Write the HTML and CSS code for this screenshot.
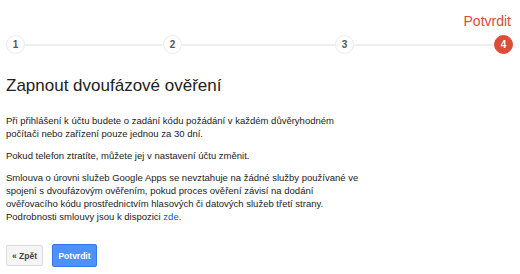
FILE: index.html
```html
<!DOCTYPE html>
<html>
<head>
<meta charset="utf-8">
<link rel="stylesheet" href="styles.css">
</head>
<body>
<div class="page">
  <div class="stepper">
    <div class="step-title">Potvrdit</div>
    <div class="steps">
      <div class="circle">1</div>
      <div class="line"></div>
      <div class="circle">2</div>
      <div class="line"></div>
      <div class="circle">3</div>
      <div class="line"></div>
      <div class="circle active">4</div>
    </div>
  </div>
  <h1 class="title">Zapnout dvoufázové ověření</h1>
  <div class="content">
    <p>Při přihlášení k účtu budete o zadání kódu požádání v každém důvěryhodném počítači nebo zařízení pouze jednou za 30 dní.</p>
    <p>Pokud telefon ztratíte, můžete jej v nastavení účtu změnit.</p>
    <p>Smlouva o úrovni služeb Google Apps se nevztahuje na žádné služby používané ve spojení s dvoufázovým ověřením, pokud proces ověření závisí na dodání ověřovacího kódu prostřednictvím hlasových či datových služeb třetí strany. Podrobnosti smlouvy jsou k dispozici <a href="#">zde</a>.</p>
  </div>
  <div class="actions">
    <button class="btn btn-back">« Zpět</button>
    <button class="btn btn-primary">Potvrdit</button>
  </div>
</div>
</body>
</html>
```
FILE: styles.css
```css
html, body {
  margin: 0;
  padding: 0;
  background: #fff;
}
body {
  font-family: "Liberation Sans", Arial, sans-serif;
  color: #222;
}
.page {
  padding: 0 6px;
  width: 507px;
}
.stepper {
  display: flex;
  flex-direction: column;
  padding-top: 13px;
}
.step-title {
  align-self: flex-end;
  color: #dd4b39;
  font-size: 14px;
  line-height: 16px;
  margin-right: 2px;
}
.steps {
  display: grid;
  grid-template-columns: 19px 138px 19px 153px 19px 140px 19px;
  align-items: center;
  margin-top: 6px;
}
.circle {
  width: 17px;
  height: 17px;
  border: 1px solid #ebebeb;
  border-radius: 50%;
  display: flex;
  align-items: center;
  justify-content: center;
  font-size: 10px;
  font-weight: bold;
  color: #555;
  background: #fff;
}
.circle.active {
  background: #dd4b39;
  border-color: #dd4b39;
  color: #fff;
}
.line {
  height: 2px;
  background: #efefef;
}
.title {
  font-size: 17px;
  font-weight: normal;
  margin: 22px 0 0;
  line-height: 20px;
  color: #222;
}
.content {
  margin-top: 18px;
  width: 360px;
  font-size: 9.5px;
  line-height: 13px;
  color: #222;
}
.content p {
  margin: 0 0 9px;
}
.content p:last-child {
  margin-bottom: 0;
}
.content a {
  color: #15c;
  text-decoration: none;
}
.actions {
  display: flex;
  align-items: center;
  gap: 9px;
  margin-top: 21px;
}
.btn {
  font-family: "Liberation Sans", Arial, sans-serif;
  font-size: 8.5px;
  font-weight: bold;
  border-radius: 2px;
  cursor: default;
}
.btn-back {
  background: #f5f5f5;
  border: 1px solid #dcdcdc;
  color: #444;
  height: 21px;
  width: 37px;
  padding: 0;
}
.btn-primary {
  background: #4d90fe;
  border: 1px solid #3079ed;
  color: #fff;
  height: 23px;
  width: 45px;
  padding: 0;
}
```
